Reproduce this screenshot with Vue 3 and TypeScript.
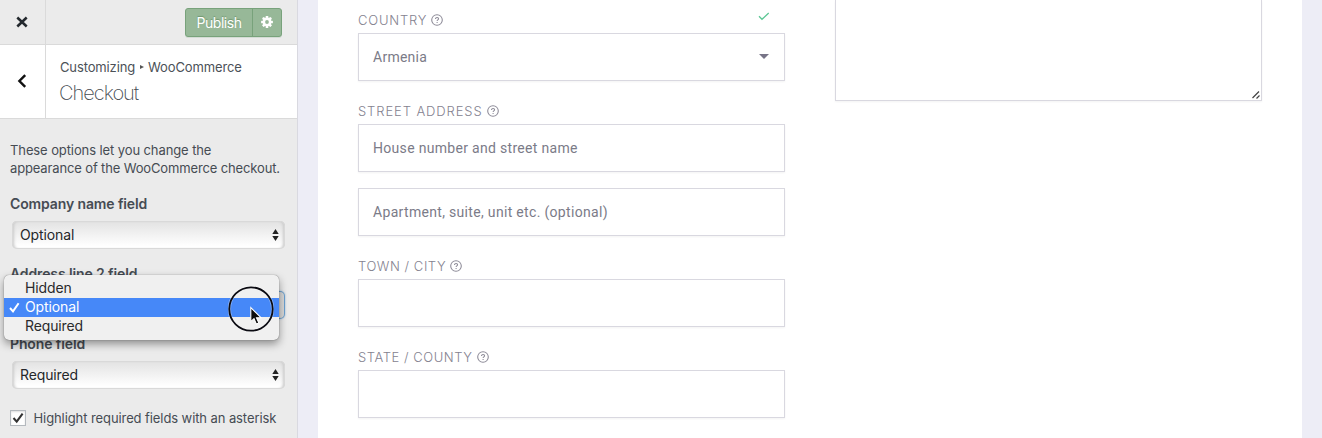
<script setup lang="ts">
interface Field {
  id: string
  label?: string
  text?: string
  select?: boolean
}

const fields: Field[] = [
  { id: 'country', label: 'COUNTRY', text: 'Armenia', select: true },
  { id: 'street', label: 'STREET ADDRESS', text: 'House number and street name' },
  { id: 'apartment', text: 'Apartment, suite, unit etc. (optional)' },
  { id: 'city', label: 'TOWN / CITY' },
  { id: 'state', label: 'STATE / COUNTY' },
]

const controls = [
  { id: 'company', label: 'Company name field', value: 'Optional', open: false },
  { id: 'address', label: 'Address line 2 field', value: '', open: true },
  { id: 'phone', label: 'Phone field', value: 'Required', open: false },
]

const options = ['Hidden', 'Optional', 'Required']
const selected = 'Optional'
</script>

<template>
  <div class="page">
    <aside class="sidebar">
      <header class="toolbar">
        <button class="side-cell close" aria-label="Close">
          <svg width="12" height="12" viewBox="0 0 12 12"><path d="M1.3 1.5 10.7 10.5M10.7 1.5 1.3 10.5" stroke="#23282d" stroke-width="2.5" fill="none" /></svg>
        </button>
        <div class="publish-group">
          <button class="publish"><span class="t-publish">Publish</span></button>
          <button class="gear" aria-label="Settings">
            <svg width="12" height="12" viewBox="-6 -6 12 12">
              <g fill="#fff">
                <rect v-for="n in 4" :key="n" x="-1.3" y="-5.9" width="2.6" height="11.8" rx=".5" :transform="`rotate(${n * 45})`" />
                <circle r="4.4" />
              </g>
              <circle r="1.9" fill="#97b898" />
            </svg>
          </button>
        </div>
      </header>
      <div class="heading">
        <button class="side-cell back" aria-label="Back">
          <svg width="10" height="14" viewBox="0 0 10 14"><path d="M8.2 1.2 2.4 7 8.2 12.8" stroke="#111" stroke-width="2.4" fill="none" /></svg>
        </button>
        <div class="titles">
          <div class="crumbs"><span class="t-custom">Customizing</span><i class="crumb-arrow"></i><span class="t-woo">WooCommerce</span></div>
          <h1><span>Checkout</span></h1>
        </div>
      </div>
      <div class="panel">
        <p class="description"><span class="line-a">These options let you change the</span><br><span class="line-b">appearance of the WooCommerce checkout.</span></p>
        <div v-for="c in controls" :key="c.id" class="control">
          <div class="control-label"><span>{{ c.label }}</span></div>
          <div class="native-select" :class="{ open: c.open }">
            <span>{{ c.value }}</span>
            <svg v-if="!c.open" width="7" height="12" viewBox="0 0 7 12"><path d="M3.5 0 6.7 5H.3zM3.5 12 .3 7h6.4z" fill="#222" /></svg>
          </div>
        </div>
        <label class="check-row">
          <span class="checkbox"><svg width="12" height="12" viewBox="0 0 12 12"><path d="M1.5 6 4.7 9.6 10.6 1.6" stroke="#333" stroke-width="2.1" fill="none" /></svg></span>
          <span class="t-check">Highlight required fields with an asterisk</span>
        </label>
      </div>
      <div class="menu">
        <div v-for="o in options" :key="o" class="option" :class="{ active: o === selected }">
          <svg v-if="o === selected" class="tick" width="11" height="11" viewBox="0 0 11 11"><path d="M1 6 4 9.3 9.6 1.2" stroke="#fff" stroke-width="2" fill="none" /></svg>
          <span>{{ o }}</span>
        </div>
      </div>
      <svg class="pointer" width="46" height="46" viewBox="0 0 46 46">
        <circle cx="23" cy="23" r="21.7" fill="none" stroke="#fff" stroke-opacity=".35" stroke-width="3.4" />
        <circle cx="23" cy="23" r="21.7" fill="none" stroke="#0b0b12" stroke-width="1.8" />
        <path d="M22.8 21.5v14.2l3.2-3 2.4 5.4 2.5-1.1-2.4-5.3h4.5z" fill="#0b0b0b" stroke="#fff" stroke-width="1.1" />
      </svg>
    </aside>
    <main class="preview">
      <section class="sheet">
        <form class="billing">
          <div v-for="f in fields" :key="f.id" class="field">
            <div v-if="f.label" class="field-label">
              <span :class="'f-' + f.id">{{ f.label }}</span>
              <svg class="help" width="12" height="12" viewBox="0 0 12 12" fill="none" stroke="#8b8996">
                <circle cx="6" cy="6" r="5.3" stroke-width="1.05" />
                <path d="M4.5 4.9c0-2 3.1-1.9 3.1-.1 0 1-1.5 1.1-1.5 2.1M6.1 8v1" stroke-width="1.05" />
              </svg>
              <svg v-if="f.select" class="valid" width="12" height="9" viewBox="0 0 12 9"><path d="M1 4.3 4 7.3 10.7 1" stroke="#5cc795" stroke-width="1.3" fill="none" /></svg>
            </div>
            <div class="input">
              <span :class="'v-' + f.id">{{ f.text }}</span>
              <i v-if="f.select" class="caret"></i>
            </div>
          </div>
        </form>
        <div class="notes">
          <svg width="8" height="8" viewBox="0 0 8 8"><path d="M.5 7 7 .5M4.5 7.5 7.5 4.5" stroke="#444" stroke-width="1.2" /></svg>
        </div>
      </section>
    </main>
  </div>
</template>

<style>
body { margin: 0; overflow: hidden; }
</style>

<style scoped>
* { box-sizing: border-box; }
button { padding: 0; border: 0; background: none; font: inherit; }
.page { display: flex; width: 1322px; height: 438px; overflow: hidden; font-family: Inter, "Liberation Sans", sans-serif; }
.page span { white-space: nowrap; }
svg { display: block; flex: none; }
.sidebar { position: relative; flex: none; width: 298px; height: 438px; background: #ebebeb; border-right: 1px solid #d9d9e0; color: #464c53; font-size: 13px; }
.toolbar { display: flex; justify-content: space-between; height: 45px; border-bottom: 1px solid #dadada; }
.side-cell { display: flex; align-items: center; justify-content: center; width: 46px; flex: none; border-right: 1px solid #dadada; }
.close { padding-right: 1px; }
.back { padding: 0 2px 2px 0; }
.publish-group { display: flex; width: 97px; height: 29px; margin: 8px 15px 0 0; border: 1px solid #78a27b; border-radius: 3px; background: #97b898; box-shadow: 0 1px 0 #78a27b33; overflow: hidden; }
.publish { width: 67px; padding-bottom: 1px; border-right: 1px solid #78a27b; color: #fff; font-size: 14px; text-shadow: 0 -1px 1px #6e966f; letter-spacing: -.45px; }
.t-publish { letter-spacing: -.45px; }
.gear { display: flex; align-items: center; justify-content: center; flex: 1; padding-bottom: 1px; }
.heading { display: flex; height: 74px; background: #fff; border-bottom: 1px solid #dadada; }
.titles { padding: 12px 0 0 14px; }
.crumbs { display: flex; align-items: center; height: 19px; color: #4b5157; letter-spacing: -.13px; }
.crumb-arrow { margin: 1px 4px 0 5px; border-left: 4px solid #555; border-top: 2.5px solid transparent; border-bottom: 2.5px solid transparent; }
h1 { margin: 4px 0 0 -1px; font-size: 20px; font-weight: 200; line-height: 26px; color: #454b51; letter-spacing: -1px; }
.panel { padding: 22px 12px 0 10px; }
.description { height: 37px; margin: 0 0 16px; line-height: 18px; }
.line-a { letter-spacing: -.1px; }
.line-b { letter-spacing: -.14px; }
.control { height: 70px; }
.control-label { height: 27px; line-height: 20px; font-size: 14px; font-weight: 600; letter-spacing: -.12px; }
.native-select { display: flex; align-items: center; justify-content: space-between; width: 273px; height: 28px; margin-left: 2px; padding: 0 6px 1px 8px; border-radius: 5px; background: linear-gradient(#e2e2e2, #fff 90%); box-shadow: inset 0 0 0 1px #d9d9d9, inset 3px 0 3px -1px #c9c9c9, inset -3px 0 3px -1px #c9c9c9; color: #24272a; font-size: 14px; letter-spacing: -.12px; }
.native-select.open { box-shadow: inset 0 0 0 1px #6ba0cf, 0 0 2px #8fb6da; background: linear-gradient(90deg, #eee, #d8d8d8); }
.check-row { display: flex; align-items: center; height: 18px; margin-top: 5px; }
.checkbox { display: flex; align-items: center; justify-content: center; width: 16px; height: 16px; margin-right: 8px; border: 1px solid #b4b9be; background: #fff; box-shadow: inset 0 1px 2px #0002; }
.t-check { margin-left: -.5px; letter-spacing: -.09px; }
.menu { position: absolute; left: 4px; top: 275px; width: 275px; height: 65px; padding-top: 4px; border-radius: 5px; background: #f0f0f0; box-shadow: 0 0 1px #0009, 0 4px 9px #0006; color: #2a2a2c; font-size: 14px; letter-spacing: -.12px; }
.option { display: flex; align-items: center; position: relative; height: 19px; padding: 0 0 2px 21px; }
.option.active { background: #4688f8; color: #fff; }
.tick { position: absolute; left: 5px; top: 4px; }
.pointer { position: absolute; left: 227.5px; top: 286px; }
.preview { flex: 1; padding: 0 20px; background: #ededf6; }
.sheet { display: flex; align-items: flex-start; gap: 50px; height: 438px; padding-left: 40px; background: #fff; }
.billing { width: 427px; padding-top: 7px; }
.field { margin-bottom: 17px; }
.field:nth-child(2) { margin-bottom: 16px; }
.field-label { display: flex; align-items: center; height: 26px; color: #84828f; font-size: 13px; font-weight: 300; }
.help { margin-left: 4px; }
.valid { margin: -7px 15px 0 auto; }
.input { display: flex; align-items: center; justify-content: space-between; height: 48px; padding: 0 15px 1px 14px; border: 1px solid #d9d8e0; box-shadow: 0 1px 2px #0000000d; color: #7b7b88; font: 14px Roboto, sans-serif; }
.caret { border-top: 5.5px solid #777487; border-left: 5px solid transparent; border-right: 5px solid transparent; }
.notes { display: flex; align-items: flex-end; justify-content: flex-end; width: 427px; height: 100.5px; padding: 0 1px 1px 0; border: 1px solid #d9d8e0; border-top: 0; box-shadow: 0 1px 2px #0000000d; }
.f-country { letter-spacing: .8px; }
.f-street { letter-spacing: .9px; }
.f-city, .f-state { letter-spacing: .55px; }
.v-country { letter-spacing: .25px; }
.v-street { letter-spacing: .31px; }
.v-apartment { letter-spacing: .32px; }
</style>
